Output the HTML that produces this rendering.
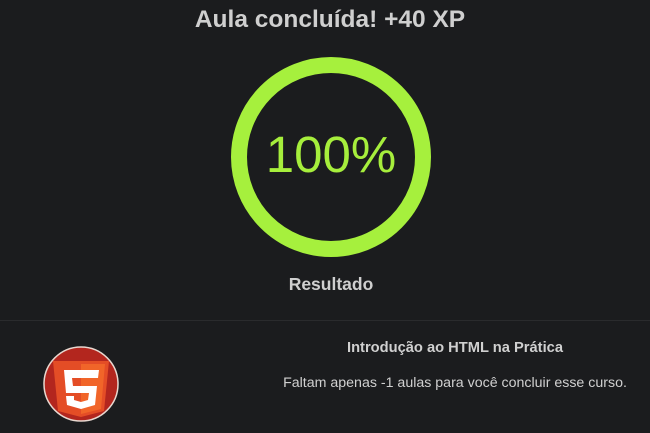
<!DOCTYPE html>
<html><head><meta charset="utf-8"><style>
body{margin:0;width:650px;height:433px;background:#1b1c1e;font-family:"Liberation Sans",sans-serif;overflow:hidden;position:relative}
.t{position:absolute;top:6px;left:0;width:660px;text-align:center;font-weight:bold;font-size:24.5px;color:#cfcfcf}
.pct{position:absolute;top:125px;left:231px;width:200px;text-align:center;font-size:51px;color:#a6ee3c}
.res{position:absolute;top:274px;left:231px;width:200px;text-align:center;font-weight:bold;font-size:17.5px;color:#cfcfcf}
.hr{position:absolute;top:320px;left:0;width:650px;height:1px;background:#2a2b2d}
.c1{position:absolute;top:340px;left:290px;width:330px;text-align:center;font-weight:bold;font-size:14.7px;color:#d0d0d0}
.c2{position:absolute;top:375px;left:280px;width:350px;text-align:center;font-size:14.2px;color:#d0d0d0}
</style></head><body>
<div class="t">Aula concluída! +40 XP</div>
<svg style="position:absolute;left:0;top:0" width="650" height="433">
<circle cx="331" cy="157" r="92" fill="none" stroke="#a6f03d" stroke-width="16"/>
<circle cx="81" cy="384" r="37" fill="#b3261e" stroke="#e8d8d0" stroke-width="1.5"/>
<path d="M53 361 L109 361 L104 411 L81 417 L58 411 Z" fill="#e44d26"/>
<path d="M81 364 L105 364 L101 409 L81 414 Z" fill="#f16529"/>
<path d="M64 370 L99 370 L98 378 L72 378 L73 386 L97 386 L95 405 L81 409 L67 405 L66 396 L74 396 L74 400 L81 402 L88 400 L89 393 L66 393 Z" fill="#fff"/>
</svg>
<div class="pct">100%</div>
<div class="res">Resultado</div>
<div class="hr"></div>
<div class="c1">Introdução ao HTML na Prática</div>
<div class="c2">Faltam apenas -1 aulas para você concluir esse curso.</div>
</body></html>
